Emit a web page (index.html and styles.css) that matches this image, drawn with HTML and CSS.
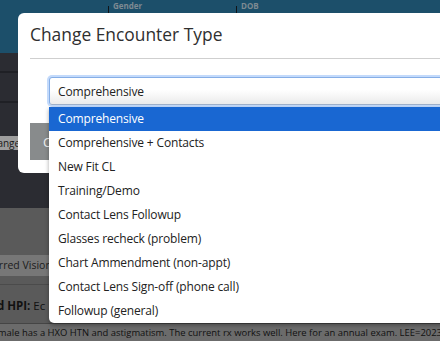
FILE: index.html
```html
<!DOCTYPE html>
<html>
<head>
<meta charset="utf-8">
<link rel="stylesheet" href="styles.css">
</head>
<body>
<div class="page">
  <header class="topbar">
    <div class="hcol">Gender</div>
    <div class="hcol">DOB</div>
  </header>
  <section class="dark">
    <div class="drow drow1"></div>
    <div class="drow drow2"></div>
    <div class="drow3"><button class="bg-btn">Change</button></div>
    <div class="panel-title"><span>History</span></div>
  </section>
  <section class="gray">
    <div class="tag"><span>Blurred Vision (OU)</span></div>
    <div class="divider"></div>
    <div class="hpi"><span><b>Expanded HPI:</b> Ec</span></div>
  </section>
  <div class="note"><span>45 year old female has a HXO HTN and astigmatism. The current rx works well. Here for an annual exam. LEE=2023</span></div>
</div>

<div class="modal">
  <div class="modal-header"><h2>Change Encounter Type</h2></div>
  <div class="modal-body">
    <div class="select">
      <span>Comprehensive</span>
      <ul class="dropdown">
        <li class="selected">Comprehensive</li>
        <li>Comprehensive + Contacts</li>
        <li>New Fit CL</li>
        <li>Training/Demo</li>
        <li>Contact Lens Followup</li>
        <li>Glasses recheck (problem)</li>
        <li>Chart Ammendment (non-appt)</li>
        <li>Contact Lens Sign-off (phone call)</li>
        <li>Followup (general)</li>
      </ul>
    </div>
    <div class="actions"><button class="m-btn">Change</button></div>
  </div>
</div>
</body>
</html>
```

FILE: styles.css
```css
html, body {
  margin: 0;
  padding: 0;
}
body {
  width: 440px;
  height: 341px;
  overflow: hidden;
  position: relative;
  font-family: "Open Sans", "Noto Sans", sans-serif;
  background: #2b2c32;
}
.page {
  display: flex;
  flex-direction: column;
}
.topbar {
  height: 53px;
  background: #1c4f6a;
  display: flex;
  align-items: flex-start;
  padding-left: 108px;
  box-sizing: border-box;
}
.hcol {
  position: relative;
  width: 128px;
  padding: 1px 0 0 5px;
  font-size: 8px;
  line-height: 10px;
  font-weight: bold;
  color: #7d8a92;
  box-sizing: border-box;
}
.hcol::before {
  content: "";
  position: absolute;
  left: 0;
  top: 6px;
  height: 7px;
  border-left: 1px solid #101418;
}
.dark {
  height: 155px;
  background: #2b2c32;
  display: flex;
  flex-direction: column;
}
.drow1 {
  height: 18px;
  border-bottom: 2px solid #1f2025;
}
.drow2 {
  height: 28px;
  border-bottom: 2px solid #1f2025;
}
.drow3 {
  padding-top: 33px;
  display: flex;
}
.bg-btn {
  margin-left: -21px;
  height: 14px;
  padding: 0 6px;
  border: 0;
  background: #9d9d9d;
  color: #1a1a1a;
  font-family: inherit;
  font-size: 10px;
  line-height: 14px;
  width: 60px;
  text-align: left;
}
.panel-title {
  margin-top: 30px;
  font-size: 12px;
  font-style: italic;
  font-weight: bold;
  color: #888;
  white-space: nowrap;
}
.panel-title span {
  margin-left: -44px;
}
.gray {
  height: 115px;
  background: #5a5a5a;
  padding-top: 47px;
  box-sizing: border-box;
  display: flex;
  flex-direction: column;
}
.tag {
  height: 21px;
  background: #777;
  color: #1c1c1c;
  font-size: 10.5px;
  line-height: 21px;
  white-space: nowrap;
  width: 120px;
  overflow: hidden;
}
.tag span {
  margin-left: -17px;
}
.divider {
  margin-top: 8px;
  border-top: 1px solid #4b4b4b;
}
.hpi {
  margin-top: 13px;
  font-size: 11.5px;
  color: #111;
  white-space: nowrap;
}
.hpi span {
  margin-left: -52px;
}
.note {
  height: 18px;
  background: #6b6b6b;
  border-top: 1px solid #454545;
  box-sizing: border-box;
  font-size: 9.45px;
  line-height: 17px;
  color: #111;
  white-space: nowrap;
  overflow: hidden;
  display: flex;
  justify-content: flex-end;
}
.note span {
  flex: none;
  margin-right: -2px;
}

/* modal */
.modal {
  position: absolute;
  left: 18px;
  top: 13px;
  width: 450px;
  height: 160px;
  background: #fff;
  border-radius: 6px;
  padding: 0 12px;
  box-sizing: border-box;
}
.modal-header {
  border-bottom: 1px solid #cfcfcf;
  padding: 10px 0 12px;
}
.modal-header h2 {
  margin: 0;
  font-size: 17.4px;
  line-height: 23px;
  font-weight: 400;
  color: #2f2f2f;
}
.modal-body {
  padding-top: 18px;
}
.select {
  position: relative;
  margin-left: 19px;
  height: 28px;
  box-sizing: border-box;
  border: 1px solid #86aee6;
  border-bottom-color: #9fb1ca;
  box-shadow: 0 0 0 2px #c3dafb;
  border-radius: 3px 0 0 3px;
  background: linear-gradient(#ffffff 45%, #ebebeb);
  padding-left: 8px;
  font-size: 12px;
  letter-spacing: -0.15px;
  color: #222;
  display: flex;
  align-items: center;
}
.dropdown {
  position: absolute;
  top: 29px;
  left: -1px;
  width: 420px;
  margin: 0;
  padding: 0;
  list-style: none;
  background: #fff;
  border-radius: 0 0 0 5px;
  box-shadow: 0 2px 4px rgba(0, 0, 0, 0.35);
  z-index: 2;
}
.dropdown li {
  height: 24px;
  line-height: 24px;
  padding-left: 9px;
  font-size: 12px;
  letter-spacing: -0.15px;
  color: #222;
  white-space: nowrap;
}
.dropdown li.selected {
  background: #1967d2;
  color: #fff;
}
.actions {
  margin-top: 18px;
  display: flex;
}
.m-btn {
  height: 37px;
  padding: 0 13px;
  border: 0;
  background: #888b8c;
  color: #eee;
  font-family: inherit;
  font-size: 13px;
}
```
